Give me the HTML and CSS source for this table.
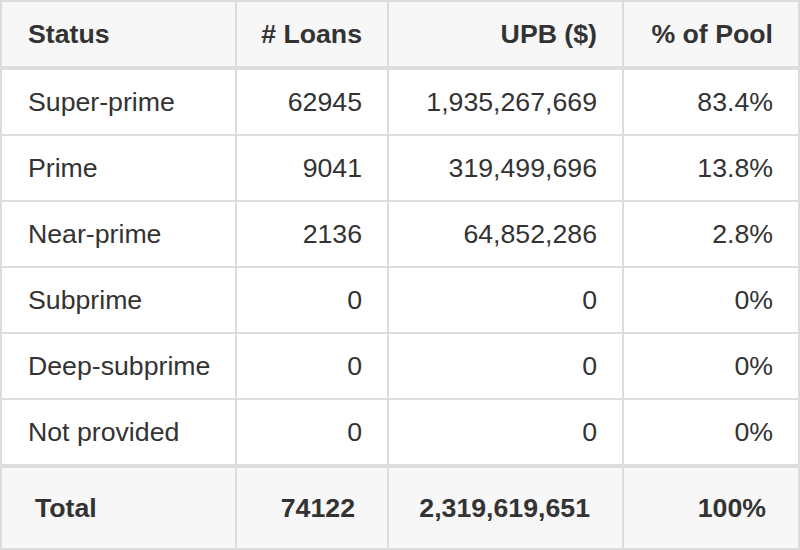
FILE: index.html
```html
<!DOCTYPE html>
<html>
<head>
<meta charset="utf-8">
<link rel="stylesheet" href="styles.css">
</head>
<body>
<div class="grid">
  <div class="cell head left">Status</div>
  <div class="cell head">&#35; Loans</div>
  <div class="cell head">UPB ($)</div>
  <div class="cell head">% of Pool</div>

  <div class="cell left">Super-prime</div>
  <div class="cell">62945</div>
  <div class="cell">1,935,267,669</div>
  <div class="cell">83.4%</div>

  <div class="cell left">Prime</div>
  <div class="cell">9041</div>
  <div class="cell">319,499,696</div>
  <div class="cell">13.8%</div>

  <div class="cell left">Near-prime</div>
  <div class="cell">2136</div>
  <div class="cell">64,852,286</div>
  <div class="cell">2.8%</div>

  <div class="cell left">Subprime</div>
  <div class="cell">0</div>
  <div class="cell">0</div>
  <div class="cell">0%</div>

  <div class="cell left">Deep-subprime</div>
  <div class="cell">0</div>
  <div class="cell">0</div>
  <div class="cell">0%</div>

  <div class="cell left">Not provided</div>
  <div class="cell">0</div>
  <div class="cell">0</div>
  <div class="cell">0%</div>

  <div class="cell total left">Total</div>
  <div class="cell total">74122</div>
  <div class="cell total">2,319,619,651</div>
  <div class="cell total">100%</div>
</div>
</body>
</html>
```
FILE: styles.css
```css
html, body {
  margin: 0;
  padding: 0;
  background: #ffffff;
}
.grid {
  width: 800px;
  height: 550px;
  box-sizing: border-box;
  display: grid;
  grid-template-columns: 233px 150px 233px 174px;
  grid-template-rows: 66px 64px 64px 64px 64px 64px 64px 82px;
  gap: 2px;
  padding: 2px;
  background: #dddddd;
  font-family: "Liberation Sans", Arial, sans-serif;
  font-size: 26.7px;
  color: #333333;
}
.cell {
  background: #ffffff;
  display: flex;
  align-items: center;
  justify-content: flex-end;
  padding: 0 25px 0 8px;
  white-space: nowrap;
}
.cell.left {
  justify-content: flex-start;
  padding: 0 8px 0 26px;
}
.cell.head {
  background: #f7f7f7;
  font-weight: bold;
  margin-bottom: 2px;
}
.cell.total {
  background: #f7f7f7;
  font-weight: bold;
  margin-top: 2px;
  padding: 0 32px 0 8px;
}
.cell.total.left {
  padding: 0 8px 0 33px;
}
```
